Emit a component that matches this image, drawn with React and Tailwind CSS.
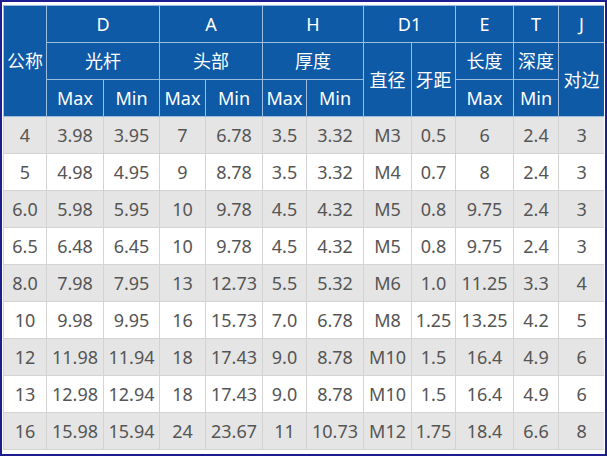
const widths = [43, 57, 56, 46, 57, 44, 57, 48, 44, 58, 45, 46];

const rows = [
  ["4", "3.98", "3.95", "7", "6.78", "3.5", "3.32", "M3", "0.5", "6", "2.4", "3"],
  ["5", "4.98", "4.95", "9", "8.78", "3.5", "3.32", "M4", "0.7", "8", "2.4", "3"],
  ["6.0", "5.98", "5.95", "10", "9.78", "4.5", "4.32", "M5", "0.8", "9.75", "2.4", "3"],
  ["6.5", "6.48", "6.45", "10", "9.78", "4.5", "4.32", "M5", "0.8", "9.75", "2.4", "3"],
  ["8.0", "7.98", "7.95", "13", "12.73", "5.5", "5.32", "M6", "1.0", "11.25", "3.3", "4"],
  ["10", "9.98", "9.95", "16", "15.73", "7.0", "6.78", "M8", "1.25", "13.25", "4.2", "5"],
  ["12", "11.98", "11.94", "18", "17.43", "9.0", "8.78", "M10", "1.5", "16.4", "4.9", "6"],
  ["13", "12.98", "12.94", "18", "17.43", "9.0", "8.78", "M10", "1.5", "16.4", "4.9", "6"],
  ["16", "15.98", "15.94", "24", "23.67", "11", "10.73", "M12", "1.75", "18.4", "6.6", "8"],
];

const th = "border border-[#9dbde0] font-normal text-white h-[37px] p-0";
const td = "border border-[#d3d3d3] h-[37px] p-0";

const App = () => {
  return (
    <div className="w-[607px] h-[456px] overflow-hidden bg-white border-2 border-[#1d1d8f] pl-px pt-[3px]">
      <div className="w-[601px] h-[448px] overflow-hidden">
        <table
          className="table-fixed border-collapse text-center text-[18px] leading-none"
          style={{ fontFamily: '"Noto Sans", "Noto Sans CJK SC", sans-serif', width: 601 }}
        >
          <colgroup>
            {widths.map((w, i) => (
              <col key={i} style={{ width: w }} />
            ))}
          </colgroup>
          <thead className="bg-[#0e5aa7]">
            <tr>
              <th rowSpan={3} className={th}>公称</th>
              <th colSpan={2} className={th}>D</th>
              <th colSpan={2} className={th}>A</th>
              <th colSpan={2} className={th}>H</th>
              <th colSpan={2} className={th}>D1</th>
              <th className={th}>E</th>
              <th className={th}>T</th>
              <th className={th}>J</th>
            </tr>
            <tr>
              <th colSpan={2} className={th}>光杆</th>
              <th colSpan={2} className={th}>头部</th>
              <th colSpan={2} className={th}>厚度</th>
              <th rowSpan={2} className={th}>直径</th>
              <th rowSpan={2} className={th}>牙距</th>
              <th className={th}>长度</th>
              <th className={th}>深度</th>
              <th rowSpan={2} className={th}>对边</th>
            </tr>
            <tr>
              <th className={th}>Max</th>
              <th className={th}>Min</th>
              <th className={th}>Max</th>
              <th className={th}>Min</th>
              <th className={th}>Max</th>
              <th className={th}>Min</th>
              <th className={th}>Max</th>
              <th className={th}>Min</th>
            </tr>
          </thead>
          <tbody className="text-[#555555]">
            {rows.map((r, i) => (
              <tr key={i} className={i % 2 === 0 ? "bg-[#e5e5e5]" : "bg-white"}>
                {r.map((c, j) => (
                  <td key={j} className={td}>{c}</td>
                ))}
              </tr>
            ))}
          </tbody>
        </table>
      </div>
    </div>
  );
};

export default App;
